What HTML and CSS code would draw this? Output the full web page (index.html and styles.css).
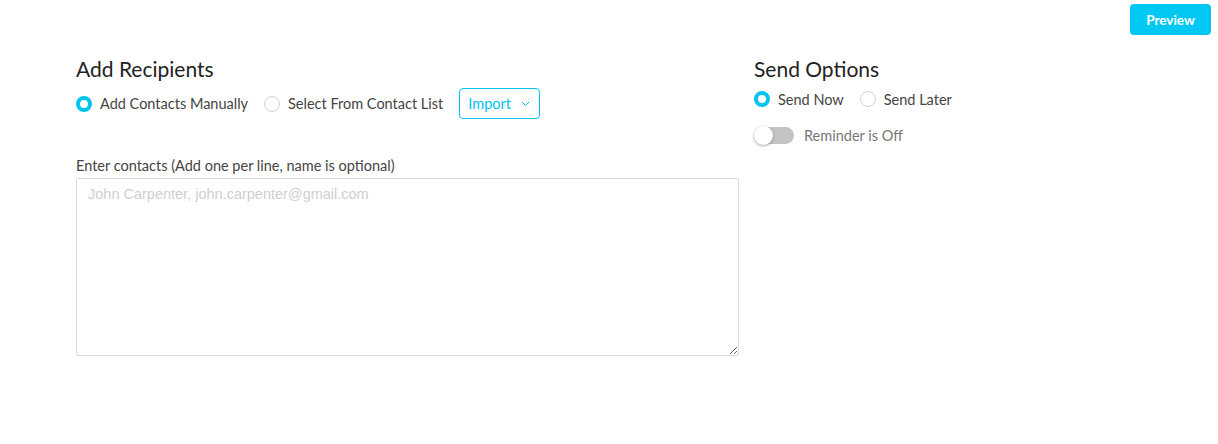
FILE: index.html
```html
<!DOCTYPE html>
<html>
<head>
    <title>Send Survey</title>
    <link rel="stylesheet" href="styles.css">
</head>
<body>

<div class="topbar">
    <button class="preview-btn">Preview</button>
</div>

<div class="container">
    <div class="recipients">
        <h2>Add Recipients</h2>
        <div class="option-row">
            <label class="radio"><span class="dot checked"></span>Add Contacts Manually</label>
            <label class="radio"><span class="dot"></span>Select From Contact List</label>
            <button class="import-btn">Import
                <svg width="9" height="6" viewBox="0 0 9 6"><path d="M1 1l3.5 3.5L8 1" fill="none" stroke="#00c4ee" stroke-width="1"/></svg>
            </button>
        </div>
        <div class="field-label">Enter contacts (Add one per line, name is optional)</div>
        <textarea class="contacts" placeholder="John Carpenter, john.carpenter@gmail.com"></textarea>
    </div>

    <div class="send-options">
        <h2>Send Options</h2>
        <div class="option-row small">
            <label class="radio"><span class="dot checked"></span>Send Now</label>
            <label class="radio"><span class="dot"></span>Send Later</label>
        </div>
        <div class="reminder">
            <span class="toggle"><span class="knob"></span></span>
            <span>Reminder is Off</span>
        </div>
    </div>
</div>

</body>
</html>
```

FILE: styles.css
```css
body {
    font-family: Lato, "Noto Sans", sans-serif;
    margin: 0;
    padding: 0;
    background: white;
    color: #333;
}
.topbar {
    display: flex;
    justify-content: flex-end;
    padding: 4px 7px 0 0;
}
.preview-btn {
    background: #00c8f2;
    color: white;
    border: none;
    border-radius: 4px;
    width: 81px;
    height: 31px;
    font-family: inherit;
    font-size: 13.5px;
    font-weight: bold;
    cursor: pointer;
}
.container {
    display: flex;
    gap: 15px;
    padding: 0 76px;
    margin-top: 20px;
}
.recipients {
    width: 663px;
}
.send-options {
    flex: 1;
}
h2 {
    margin: 0;
    font-size: 21px;
    font-weight: normal;
    color: #222;
    line-height: 28px;
}
.option-row {
    display: flex;
    align-items: center;
    height: 31px;
    margin-top: 5px;
    font-size: 14.5px;
    color: #444;
}
.option-row.small {
    height: 20px;
    margin-top: 6px;
}
.radio {
    display: flex;
    align-items: center;
    margin-right: 16px;
}
.dot {
    width: 16px;
    height: 16px;
    border: 1px solid #d4d4d4;
    border-radius: 50%;
    margin-right: 8px;
    box-sizing: border-box;
}
.dot.checked {
    border: 4px solid #00c4ee;
}
.import-btn {
    height: 31px;
    width: 81px;
    border: 1px solid #00c4ee;
    border-radius: 4px;
    background: white;
    color: #00c4ee;
    font-family: inherit;
    font-size: 14.5px;
    display: flex;
    align-items: center;
    justify-content: space-between;
    padding: 0 9px 0 8px;
}
.field-label {
    font-size: 14.5px;
    color: #444;
    margin-top: 38px;
}
.contacts {
    display: block;
    width: 663px;
    height: 178px;
    margin-top: 4px;
    border: 1px solid #d9d9d9;
    border-radius: 2px;
    box-sizing: border-box;
    padding: 7px 11px;
    font-family: "Liberation Sans", Arial, sans-serif;
    font-size: 14.5px;
}
.contacts::placeholder {
    color: #cfcfcf;
}
.reminder {
    display: flex;
    align-items: center;
    gap: 10px;
    margin-top: 18px;
    font-size: 14.5px;
    color: #777;
}
.toggle {
    width: 40px;
    height: 17px;
    background: #c4c4c4;
    border-radius: 9px;
    position: relative;
}
.knob {
    position: absolute;
    left: 0;
    top: -1px;
    width: 19px;
    height: 19px;
    border-radius: 50%;
    background: white;
    box-shadow: 0 1px 3px rgba(0,0,0,0.35);
}
```
